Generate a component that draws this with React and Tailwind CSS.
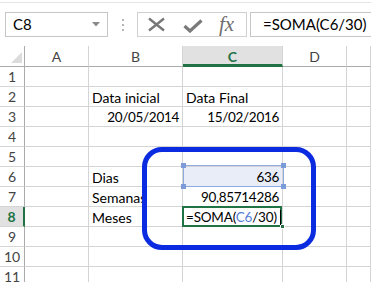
import React from 'react'

const cols = ['A', 'B', 'C', 'D', '']

const data = {
  2: { B: { t: 'Data inicial' }, C: { t: 'Data Final' } },
  3: { B: { t: '20/05/2014', r: true }, C: { t: '15/02/2016', r: true } },
  6: { B: { t: 'Dias' }, C: { t: '636', r: true } },
  7: { B: { t: 'Semanas' }, C: { t: '90,85714286', r: true } },
  8: { B: { t: 'Meses' } },
}

const Handle = ({ className }) => (
  <div className={`absolute w-[5px] h-[5px] bg-[#7b9cd8] ${className}`} />
)

const FormulaBar = () => (
  <div className="flex items-stretch h-[25px] mt-[9px] text-[15px] text-black">
    {/* name box */}
    <div className="ml-[5px] w-[103px] border border-[#c6c6c6] flex items-center pl-[7px] pr-[7px]">
      <span className="flex-1">C8</span>
      <svg width="8" height="5" viewBox="0 0 8 5">
        <polygon points="0,0 8,0 4,4.5" fill="#8a8a8a" />
      </svg>
    </div>
    <div className="w-[29px] flex flex-col items-center justify-center gap-[3px]">
      <div className="w-[2px] h-[2px] bg-[#b5b5b5]" />
      <div className="w-[2px] h-[2px] bg-[#b5b5b5]" />
      <div className="w-[2px] h-[2px] bg-[#b5b5b5]" />
    </div>
    {/* cancel / enter / fx */}
    <div className="w-[110px] border border-[#d0d0d0] flex items-center">
      <svg className="ml-[9px]" width="19" height="15" viewBox="0 0 19 15">
        <path d="M2 1.5 L17 13.5 M17 1.5 L2 13.5" stroke="#777" strokeWidth="2.4" fill="none" />
      </svg>
      <svg className="ml-[17px] mt-[3px]" width="20" height="14" viewBox="0 0 20 14">
        <path d="M1.5 7 L7 12 L18.5 1.5" stroke="#7a7a7a" strokeWidth="3.2" fill="none" />
      </svg>
      <span className="ml-[16px] text-[21px] italic text-[#6e6e6e] font-['Liberation_Serif',serif] leading-none">
        fx
      </span>
    </div>
    <div className="flex-1 ml-[3px] border border-r-0 border-[#c6c6c6] flex items-center pl-[12px]">
      =SOMA(C6/30)
    </div>
  </div>
)

export default function App() {
  const rows = [1, 2, 3, 4, 5, 6, 7, 8, 9, 10, 11]
  return (
    <div className="relative w-[371px] h-[282px] overflow-hidden bg-white font-['Lato',sans-serif]">
      <div className="h-[3px] border-b border-[#e4e4e4]" />
      <FormulaBar />

      <div className="mt-[9px] grid grid-cols-[25px_64px_94px_100px_64px_1fr] grid-rows-[21px] auto-rows-[20px] text-[14px]">
        {/* header row */}
        <div className="relative border-r border-b border-[#ababab]">
          <svg className="absolute left-[11px] top-[6px]" width="11" height="11" viewBox="0 0 11 11">
            <polygon points="11,0 11,11 0,11" fill="#dcdcdc" />
          </svg>
        </div>
        {cols.map((c, i) =>
          c === 'C' ? (
            <div key={i} className="bg-[#e1e1e1] border-r border-[#d4d4d4] border-b-[3px] border-b-[#217346] flex items-center justify-center font-bold text-[#217346] pt-[2px]">
              {c}
            </div>
          ) : (
            <div key={i} className="border-r border-b border-[#d4d4d4] border-b-[#ababab] flex items-center justify-center text-[#444]">
              {c}
            </div>
          )
        )}

        {rows.map(n => {
          const d = data[n] || {}
          return (
            <React.Fragment key={n}>
              {n === 8 ? (
                <div className="bg-[#e1e1e1] border-b border-[#d4d4d4] border-r-2 border-r-[#217346] flex items-center justify-center font-bold text-[#217346]">
                  {n}
                </div>
              ) : (
                <div className="border-b border-[#d4d4d4] border-r border-r-[#ababab] flex items-center justify-center text-[#444]">
                  {n}
                </div>
              )}
              {cols.map((c, i) => {
                const cell = d[c]
                if (c === 'C' && n === 6) {
                  return (
                    <div key={i} className="relative bg-[#e8edf8] border-r border-b border-[#d4d4d4] flex items-center justify-end pr-[3px] pt-[2px]">
                      <div className="absolute left-0 -top-[2px] -right-[2px] -bottom-px border border-[#8eaae0]" />
                      <Handle className="-left-[2px] -top-[4px]" />
                      <Handle className="-right-[4px] -top-[4px]" />
                      <Handle className="-left-[2px] -bottom-[3px]" />
                      <Handle className="-right-[4px] -bottom-[3px]" />
                      <span className="relative text-[13.5px] tracking-[-0.3px]">{cell.t}</span>
                    </div>
                  )
                }
                if (c === 'C' && n === 8) {
                  return (
                    <div key={i} className="relative border-r border-b border-[#d4d4d4] flex items-center pl-[3px] pt-[2px] whitespace-nowrap">
                      <div className="absolute -left-px -top-px right-0 -bottom-px border-2 border-[#217346]" />
                      <div className="absolute -right-[3px] -bottom-[3px] w-[5px] h-[5px] bg-[#217346] border border-white" />
                      <span className="relative text-[13.5px] tracking-[-0.2px]">
                        =SOMA(<span className="text-[#5a7fd6]">C6</span>/30)
                      </span>
                      <div className="relative ml-[3px] w-px h-[15px] bg-black" />
                    </div>
                  )
                }
                return (
                  <div
                    key={i}
                    className={`border-r border-b border-[#d4d4d4] flex items-center pt-[2px] whitespace-nowrap overflow-hidden ${cell && cell.r ? 'justify-end pr-[3px] text-[13.5px] tracking-[-0.3px]' : 'pl-[3px]'}`}
                  >
                    {cell ? cell.t : ''}
                  </div>
                )
              })}
            </React.Fragment>
          )
        })}
      </div>

      {/* hand drawn highlight */}
      <div className="absolute left-[142px] top-[147px] w-[174px] h-[103px] border-[5px] border-[#0b2be0] rounded-[20px] z-10" />
    </div>
  )
}
